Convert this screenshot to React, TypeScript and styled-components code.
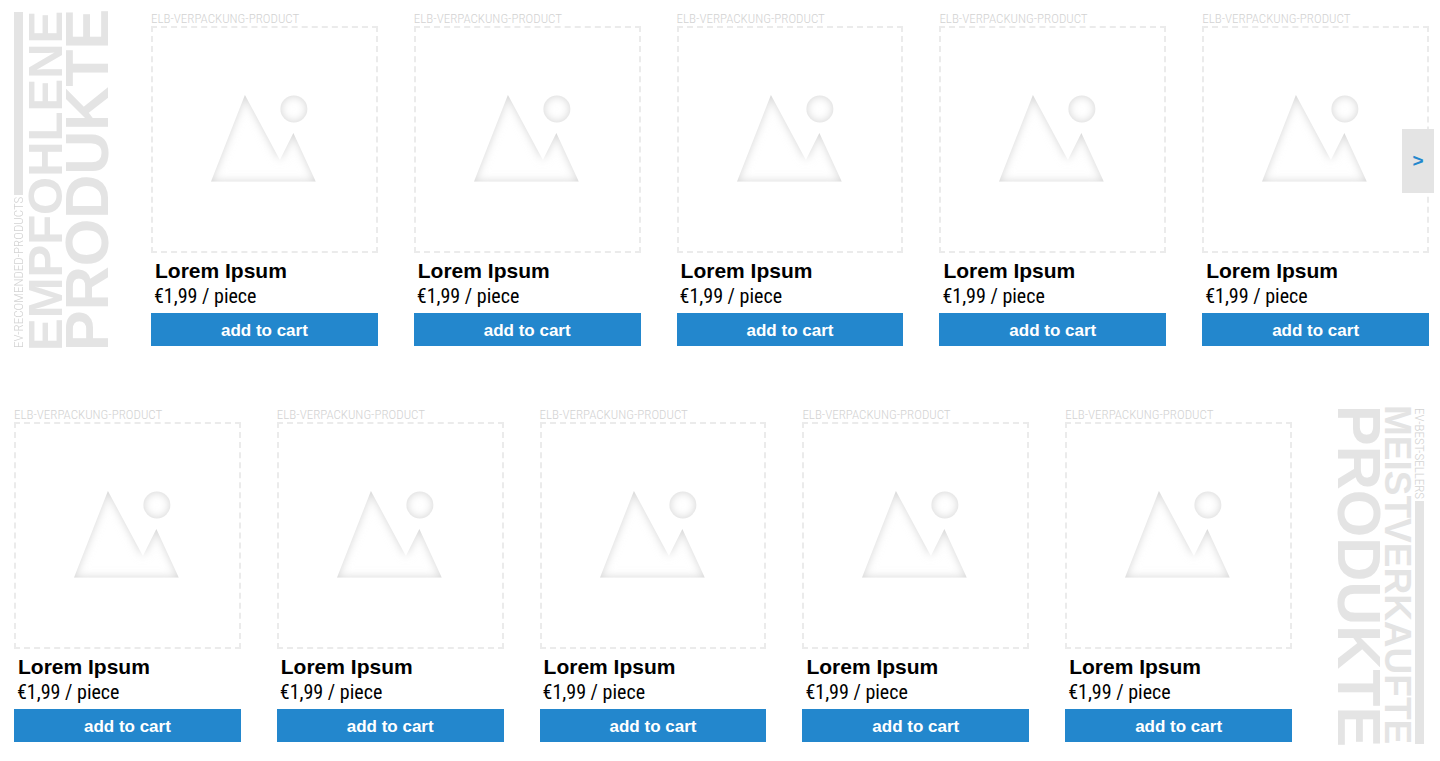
import React, { useId } from "react";
import styled, { createGlobalStyle } from "styled-components";

const GlobalStyle = createGlobalStyle`
  *, *::before, *::after { box-sizing: border-box; }
  body {
    margin: 0;
    background: #fff;
    color: #000;
    font-family: "Liberation Sans", Arial, sans-serif;
  }
`;

const narrow = `"Arial Narrow", "Roboto Condensed", "Liberation Sans", sans-serif`;

const Page = styled.main`
  display: flex;
  flex-direction: column;
  gap: 60px;
  padding: 12px 11px 17px 14px;
`;

const Section = styled.section<{ $gap: number; $end: number }>`
  position: relative;
  display: flex;
  gap: ${(p) => p.$gap}px;
  padding-right: ${(p) => p.$end}px;
`;

const Heading = styled.header<{ $flip?: boolean }>`
  flex: none;
  display: flex;
  writing-mode: vertical-rl;
  flex-direction: column;
  height: 336px;
  color: #e4e4e4;
  transform: ${(p) => (p.$flip ? "rotate(180deg)" : "none")};
`;

const Marker = styled.div`
  display: flex;
  align-items: center;
  gap: 2px;
  font: 300 13px/10px ${narrow};
  color: #d2d2d2;
  white-space: nowrap;

  &::after {
    content: "";
    flex: 1;
    width: 9px;
    background: #e4e4e4;
  }
`;

const Title = styled.h2`
  margin: 0;
  font-weight: 700;
  white-space: nowrap;
`;

const TitleLine = styled.span<{ $size: number; $line: number }>`
  display: block;
  font-size: ${(p) => p.$size}px;
  line-height: ${(p) => p.$line}px;
  text-indent: -3px;
`;

const Products = styled.ul`
  flex: 1;
  display: grid;
  grid-template-columns: repeat(5, minmax(0, 1fr));
  gap: 36px;
  margin: 0;
  padding: 0;
  list-style: none;
`;

const Card = styled.li`
  display: flex;
  flex-direction: column;
`;

const Tag = styled.span`
  color: #d2d2d2;
  font: 300 13px/14px ${narrow};
  white-space: nowrap;
`;

const Frame = styled.div`
  aspect-ratio: 1;
  border: 2px dashed #ebebeb;
`;

const Drawing = styled.svg`
  display: block;
  width: 100%;
  height: 100%;
`;

const Name = styled.h3`
  margin: 5px 0 0 4px;
  font-size: 21px;
  line-height: 26px;
`;

const Price = styled.p`
  margin: 0 0 5px 3px;
  font: 20px/24px ${narrow};
`;

const CartButton = styled.button`
  height: 33px;
  padding: 2px 0 0;
  border: 0;
  background: #2387cd;
  color: #fff;
  font: 700 17px/31px "Liberation Sans", Arial, sans-serif;
  cursor: pointer;
`;

const NextButton = styled.button`
  position: absolute;
  top: 117px;
  right: -5px;
  width: 32px;
  height: 64px;
  padding: 0;
  border: 0;
  background: #e4e4e4;
  color: #2387cd;
  font: 700 19px/64px "Liberation Sans", Arial, sans-serif;
  cursor: pointer;
`;

const MOUNTAINS = "M92 67 L127 132 L140.500 105 L163 154 H58 Z";
const SUN = "M127.500 81 a13.500 13.500 0 1 0 27 0 a13.500 13.500 0 1 0 -27 0 Z";
const SURROUND = "M0 0 H223 V223 H0 Z ";

function Placeholder() {
  const id = useId();
  return (
    <Drawing viewBox="0 0 223 223" role="img" aria-label="Product image">
      <defs>
        <clipPath id={`${id}m`}>
          <path d={MOUNTAINS} />
        </clipPath>
        <clipPath id={`${id}s`}>
          <path d={SUN} />
        </clipPath>
        <filter id={`${id}b`}>
          <feGaussianBlur stdDeviation="5" />
        </filter>
      </defs>
      <g clipPath={`url(#${id}m)`}>
        <path d={SURROUND + MOUNTAINS} fill="#d4d4d4" fillRule="evenodd" filter={`url(#${id}b)`} />
      </g>
      <g clipPath={`url(#${id}s)`}>
        <path d={SURROUND + SUN} fill="#d4d4d4" fillRule="evenodd" filter={`url(#${id}b)`} />
      </g>
    </Drawing>
  );
}

const PRODUCTS = Array.from({ length: 5 }, (_, i) => ({
  id: i,
  tag: "ELB-VERPACKUNG-PRODUCT",
  name: "Lorem Ipsum",
  price: "€1,99 / piece",
}));

function ProductList() {
  return (
    <Products>
      {PRODUCTS.map((p) => (
        <Card key={p.id}>
          <Tag>{p.tag}</Tag>
          <Frame>
            <Placeholder />
          </Frame>
          <Name>{p.name}</Name>
          <Price>{p.price}</Price>
          <CartButton type="button">add to cart</CartButton>
        </Card>
      ))}
    </Products>
  );
}

export default function App() {
  return (
    <>
      <GlobalStyle />
      <Page>
        <Section $gap={43} $end={0}>
          <Heading $flip>
            <Marker>EV-RECOMENDED-PRODUCTS</Marker>
            <Title>
              <TitleLine $size={49} $line={42}>EMPFOHLENE</TitleLine>
              <TitleLine $size={61} $line={42}>PRODUKTE</TitleLine>
            </Title>
          </Heading>
          <ProductList />
          <NextButton type="button" aria-label="Next products">&gt;</NextButton>
        </Section>
        <Section $gap={46} $end={5}>
          <ProductList />
          <Heading>
            <Marker>EV-BEST-SELLERS</Marker>
            <Title>
              <TitleLine $size={37} $line={34}>MEISTVERKAUFTE</TitleLine>
              <TitleLine $size={61} $line={42}>PRODUKTE</TitleLine>
            </Title>
          </Heading>
        </Section>
      </Page>
    </>
  );
}
